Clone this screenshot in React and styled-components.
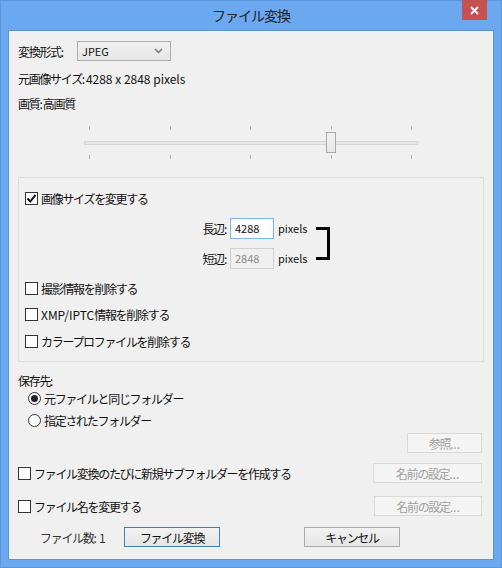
import React from 'react';
import styled, { createGlobalStyle } from 'styled-components';

const GlobalStyle = createGlobalStyle`
  html, body {
    margin: 0;
    padding: 0;
  }
  body {
    font-family: "Noto Sans CJK JP", sans-serif;
    font-size: 12px;
    letter-spacing: -1.3px;
    color: #111;
  }
`;

const Window = styled.div`
  width: 502px;
  height: 568px;
  box-sizing: border-box;
  background: #6ca8f0;
  border: 1px solid #5b95dc;
  padding: 0 7px 7px;
  display: flex;
  flex-direction: column;
`;

const TitleBar = styled.div`
  height: 29px;
  display: grid;
  grid-template-columns: 1fr auto 1fr;
  align-items: start;
`;

const Title = styled.div`
  grid-column: 2;
  line-height: 29px;
  font-size: 14px;
  letter-spacing: -1px;
  color: #222;
`;

const CloseButton = styled.div`
  grid-column: 3;
  justify-self: end;
  margin: -1px 7px 0 0;
  width: 25px;
  height: 20px;
  background: #c75050;
  display: flex;
  align-items: center;
  justify-content: center;
`;

const Client = styled.div`
  flex: 1;
  background: #f0f0f0;
  border: 1px solid #5a91d4;
  padding: 0 10px 0 9px;
  display: flex;
  flex-direction: column;
`;

const FieldRow = styled.div`
  height: ${(p) => p.$h || 20}px;
  margin-top: ${(p) => p.$mt || 0}px;
  display: flex;
  align-items: center;
  white-space: nowrap;
`;

const Label = styled.span`
  width: ${(p) => (p.$w ? `${p.$w}px` : 'auto')};
  flex: none;
  color: ${(p) => (p.$muted ? '#333' : '#111')};
`;

const Latin = styled.span`
  letter-spacing: 0;
  margin-left: ${(p) => (p.$tight ? 0 : 2)}px;
`;

const Select = styled.div`
  width: 94px;
  height: 20px;
  box-sizing: border-box;
  border: 1px solid #acacac;
  background: linear-gradient(#f2f2f2, #e6e6e6);
  display: flex;
  align-items: center;
  justify-content: space-between;
  padding: 0 7px 0 4px;
  font-size: 11px;
  letter-spacing: 0;
`;

const Slider = styled.div`
  width: 334px;
  margin: 7px 0 0 66px;
  display: flex;
  flex-direction: column;
`;

const TickRow = styled.div`
  height: 4px;
  margin-top: ${(p) => p.$mt}px;
  padding: 0 6px 0 5px;
  display: flex;
  justify-content: space-between;
`;

const Tick = styled.span`
  width: 1px;
  height: 4px;
  background: #b4b4b4;
`;

const TrackArea = styled.div`
  position: relative;
  height: 21px;
  margin-top: 2px;
  display: flex;
  align-items: center;
`;

const Track = styled.div`
  width: 100%;
  height: 4px;
  box-sizing: border-box;
  border: 1px solid #d6d6d6;
  background: #e7e7e7;
`;

const Thumb = styled.div`
  position: absolute;
  top: 0;
  width: 10px;
  height: 21px;
  box-sizing: border-box;
  border: 1px solid #a9a9a9;
  background: linear-gradient(#f2f2f2, #e6e6e6);
`;

const GroupBox = styled.div`
  margin-top: 18px;
  width: 466px;
  height: 185px;
  box-sizing: border-box;
  border: 1px solid #dcdcdc;
  padding: 10px 0 0 6px;
  display: flex;
  flex-direction: column;
`;

const CheckRow = styled.label`
  height: 20px;
  margin-top: ${(p) => p.$mt || 0}px;
  display: flex;
  align-items: center;
  gap: 3px;
  white-space: nowrap;
`;

const Box = styled.span`
  width: 13px;
  height: 13px;
  box-sizing: border-box;
  border: 1px solid #333;
  background: #fff;
  display: flex;
  align-items: center;
  justify-content: center;
  flex: none;
`;

const Radio = styled.span`
  width: 13px;
  height: 13px;
  box-sizing: border-box;
  border-radius: 50%;
  border: 1px solid #333;
  background: #fff;
  display: flex;
  align-items: center;
  justify-content: center;
  flex: none;
  &::after {
    content: '';
    width: 7px;
    height: 7px;
    border-radius: 50%;
    background: ${(p) => (p.$on ? '#222' : 'transparent')};
  }
`;

const SizeGrid = styled.div`
  margin: 10px 0 0 165px;
  display: grid;
  grid-template-columns: 36px 44px 34px 14px;
  grid-template-rows: 20px 20px;
  column-gap: 4px;
  row-gap: 10px;
  align-items: center;
`;

const SizeLabel = styled.span`
  text-align: right;
`;

const NumInput = styled.div`
  height: 21px;
  box-sizing: border-box;
  border: 1px solid ${(p) => (p.$disabled ? '#cfcfcf' : '#7eb4ea')};
  background: ${(p) => (p.$disabled ? '#f0f0f0' : '#fff')};
  color: ${(p) => (p.$disabled ? '#8a8a8a' : '#111')};
  padding: 0 4px;
  display: flex;
  align-items: center;
  letter-spacing: 0;
  font-size: 11px;
`;

const Unit = styled.span`
  letter-spacing: 0;
  font-size: 11px;
`;

const Bracket = styled.div`
  grid-column: 4;
  grid-row: 1 / span 2;
  height: 33px;
  box-sizing: border-box;
  border: 3px solid #000;
  border-left: none;
`;

const RadioRow = styled.label`
  height: 18px;
  margin: ${(p) => p.$mt || 0}px 0 0 10px;
  display: flex;
  align-items: center;
  gap: 3px;
  white-space: nowrap;
`;

const Button = styled.div`
  width: ${(p) => p.$w}px;
  height: 20px;
  box-sizing: border-box;
  border: 1px solid ${(p) => (p.$disabled ? '#d9d9d9' : p.$default ? '#3c7fb1' : '#acacac')};
  background: ${(p) =>
    p.$disabled ? '#f4f4f4' : 'linear-gradient(#f2f2f2, #e5e5e5)'};
  color: ${(p) => (p.$disabled ? '#a0a0a0' : '#111')};
  display: flex;
  align-items: center;
  justify-content: center;
  flex: none;
`;

const ButtonRow = styled.div`
  height: 20px;
  margin-top: ${(p) => p.$mt}px;
  display: flex;
  align-items: center;
  justify-content: ${(p) => (p.$right ? 'flex-end' : 'space-between')};
  padding-right: 1px;
  white-space: nowrap;
`;

const Footer = styled.div`
  height: 20px;
  margin-top: 11px;
  padding-left: 22px;
  display: grid;
  grid-template-columns: 84px 96px 84px 96px;
  align-items: center;
  white-space: nowrap;
`;

const Check = () => (
  <svg width="11" height="11" viewBox="0 0 11 11">
    <path d="M1.5 5.5 L4.3 8.5 L9.5 1.8" fill="none" stroke="#111" strokeWidth="2" />
  </svg>
);

function CheckItem({ checked, children, mt }) {
  return (
    <CheckRow $mt={mt}>
      <Box>{checked && <Check />}</Box>
      <span>{children}</span>
    </CheckRow>
  );
}

const Dots = () => <Latin $tight>...</Latin>;

const ticks = [0, 1, 2, 3, 4];
const quality = 3;

export default function App() {
  const thumbLeft = 242 * (quality / 3);
  return (
    <>
      <GlobalStyle />
      <Window>
        <TitleBar>
          <Title>ファイル変換</Title>
          <CloseButton>
            <svg width="9" height="9" viewBox="0 0 9 9">
              <path d="M1 1 L8 8 M8 1 L1 8" stroke="#fff" strokeWidth="1.8" />
            </svg>
          </CloseButton>
        </TitleBar>
        <Client>
          <FieldRow $mt={10}>
            <Label $w={59}>変換形式:</Label>
            <Select>
              <span>JPEG</span>
              <svg width="9" height="6" viewBox="0 0 9 6">
                <path d="M1 1 L4.5 4.5 L8 1" fill="none" stroke="#707070" strokeWidth="1.4" />
              </svg>
            </Select>
          </FieldRow>
          <FieldRow $mt={7}>
            <Label>元画像サイズ:</Label>
            <Latin>4288 x 2848 pixels</Latin>
          </FieldRow>
          <FieldRow $mt={5}>
            <Label>画質: 高画質</Label>
          </FieldRow>
          <Slider>
            <TickRow $mt={6}>
              {ticks.map((t) => (
                <Tick key={t} />
              ))}
            </TickRow>
            <TrackArea>
              <Track />
              <Thumb style={{ left: thumbLeft }} />
            </TrackArea>
            <TickRow $mt={2}>
              {ticks.map((t) => (
                <Tick key={t} />
              ))}
            </TickRow>
          </Slider>
          <GroupBox>
            <CheckItem checked>画像サイズを変更する</CheckItem>
            <SizeGrid>
              <SizeLabel>長辺:</SizeLabel>
              <NumInput>4288</NumInput>
              <Unit>pixels</Unit>
              <Bracket />
              <SizeLabel>短辺:</SizeLabel>
              <NumInput $disabled>2848</NumInput>
              <Unit>pixels</Unit>
            </SizeGrid>
            <CheckItem mt={10}>撮影情報を削除する</CheckItem>
            <CheckItem mt={6}>
              <Latin $tight>XMP/IPTC</Latin>情報を削除する
            </CheckItem>
            <CheckItem mt={7}>カラープロファイルを削除する</CheckItem>
          </GroupBox>
          <FieldRow $h={18} $mt={9}>
            <Label>保存先:</Label>
          </FieldRow>
          <RadioRow>
            <Radio $on />
            <span>元ファイルと同じフォルダー</span>
          </RadioRow>
          <RadioRow $mt={4}>
            <Radio />
            <span>指定されたフォルダー</span>
          </RadioRow>
          <ButtonRow $right $mt={4}>
            <Button $w={75} $disabled>参照<Dots /></Button>
          </ButtonRow>
          <ButtonRow $mt={10}>
            <CheckItem>ファイル変換のたびに新規サブフォルダーを作成する</CheckItem>
            <Button $w={109} $disabled>名前の設定<Dots /></Button>
          </ButtonRow>
          <ButtonRow $mt={13}>
            <CheckItem>ファイル名を変更する</CheckItem>
            <Button $w={108} $disabled>名前の設定<Dots /></Button>
          </ButtonRow>
          <Footer>
            <Label $muted>
              ファイル数: <Latin>1</Latin>
            </Label>
            <Button $w={96} $default>ファイル変換</Button>
            <span />
            <Button $w={96}>キャンセル</Button>
          </Footer>
        </Client>
      </Window>
    </>
  );
}
